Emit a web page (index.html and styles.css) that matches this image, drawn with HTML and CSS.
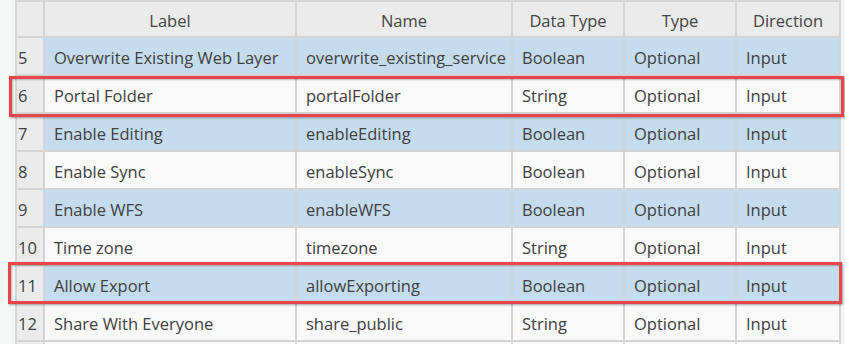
FILE: index.html
```html
<!DOCTYPE html>
<html>
<head>
<meta charset="utf-8">
<link rel="stylesheet" href="styles.css">
</head>
<body>
<div class="wrap">
  <div class="grid">
    <div class="hd num"></div>
    <div class="hd">Label</div>
    <div class="hd">Name</div>
    <div class="hd">Data Type</div>
    <div class="hd">Type</div>
    <div class="hd">Direction</div>

    <div class="num">5</div>
    <div class="c sel">Overwrite Existing Web Layer</div>
    <div class="c sel">overwrite_existing_service</div>
    <div class="c sel">Boolean</div>
    <div class="c sel">Optional</div>
    <div class="c sel">Input</div>

    <div class="num">6</div>
    <div class="c">Portal Folder</div>
    <div class="c">portalFolder</div>
    <div class="c">String</div>
    <div class="c">Optional</div>
    <div class="c">Input</div>

    <div class="num">7</div>
    <div class="c sel">Enable Editing</div>
    <div class="c sel">enableEditing</div>
    <div class="c sel">Boolean</div>
    <div class="c sel">Optional</div>
    <div class="c sel">Input</div>

    <div class="num">8</div>
    <div class="c">Enable Sync</div>
    <div class="c">enableSync</div>
    <div class="c">Boolean</div>
    <div class="c">Optional</div>
    <div class="c">Input</div>

    <div class="num">9</div>
    <div class="c sel">Enable WFS</div>
    <div class="c sel">enableWFS</div>
    <div class="c sel">Boolean</div>
    <div class="c sel">Optional</div>
    <div class="c sel">Input</div>

    <div class="num">10</div>
    <div class="c">Time zone</div>
    <div class="c">timezone</div>
    <div class="c">String</div>
    <div class="c">Optional</div>
    <div class="c">Input</div>

    <div class="num">11</div>
    <div class="c sel">Allow Export</div>
    <div class="c sel">allowExporting</div>
    <div class="c sel">Boolean</div>
    <div class="c sel">Optional</div>
    <div class="c sel">Input</div>

    <div class="num">12</div>
    <div class="c">Share With Everyone</div>
    <div class="c">share_public</div>
    <div class="c">String</div>
    <div class="c">Optional</div>
    <div class="c">Input</div>

    <div class="num"></div>
    <div class="c"></div>
    <div class="c"></div>
    <div class="c"></div>
    <div class="c"></div>
    <div class="c"></div>
  </div>
  <div class="mark mark-a"></div>
  <div class="mark mark-b"></div>
</div>
</body>
</html>
```

FILE: styles.css
```css
html, body {
  margin: 0;
  padding: 0;
  background: #f5f7f6;
  height: 344px;
  overflow: hidden;
}
.wrap {
  position: relative;
  padding-left: 15px;
  font-family: "Open Sans", "Noto Sans", sans-serif;
  font-size: 16.5px;
  color: #404040;
}
.grid {
  display: grid;
  grid-template-columns: 26px 250px 214px 110px 110px 102px;
  grid-template-rows: 34px repeat(9, 36px);
  gap: 2px;
  padding: 2px;
  background: #d4d4d4;
  width: max-content;
}
.grid > div {
  display: flex;
  align-items: center;
  white-space: nowrap;
  overflow: hidden;
  padding-top: 2px;
}
.hd {
  background: #ebebeb;
  justify-content: center;
  color: #444;
}
.num {
  background: #ebebeb;
  padding-left: 1px;
}
.c {
  background: #f8f9f8;
  padding-left: 9px;
}
.c.sel {
  background: #c5dcee;
}
.mark {
  position: absolute;
  border: 3px solid #e8454b;
  box-shadow: 1px 1px 2px rgba(0,0,0,0.35), inset 1px 1px 2px rgba(0,0,0,0.25);
}
.mark-a {
  left: 9px;
  top: 76px;
  width: 829px;
  height: 35px;
}
.mark-b {
  left: 8px;
  top: 262px;
  width: 828px;
  height: 36px;
}
```
